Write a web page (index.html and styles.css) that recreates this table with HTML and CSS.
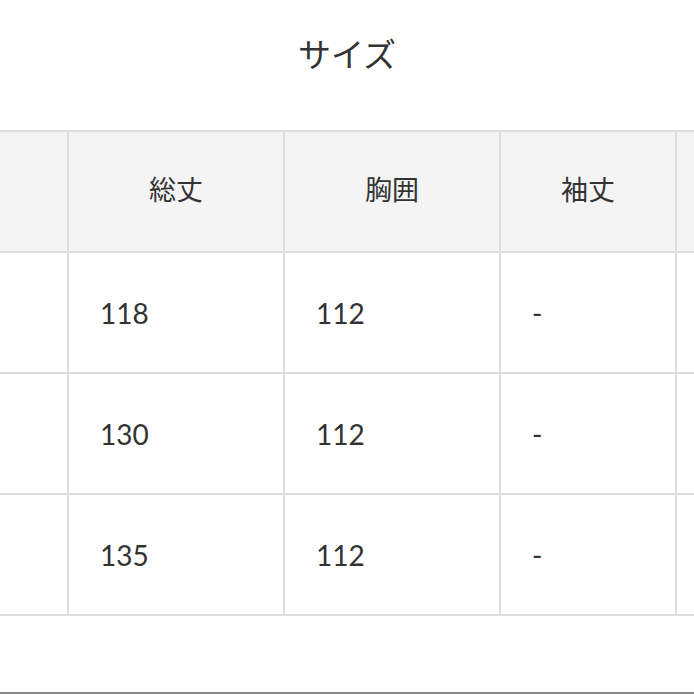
FILE: index.html
```html
<!DOCTYPE html>
<html lang="ja">
<head>
<meta charset="utf-8">
<title>サイズ</title>
<link rel="stylesheet" href="styles.css">
</head>
<body>
<div class="page">
  <h2 class="title">サイズ</h2>
  <div class="table">
    <div class="cell head"></div>
    <div class="cell head">総丈</div>
    <div class="cell head">胸囲</div>
    <div class="cell head">袖丈</div>
    <div class="cell head last"></div>

    <div class="cell"></div>
    <div class="cell num">118</div>
    <div class="cell num">112</div>
    <div class="cell num">-</div>
    <div class="cell last"></div>

    <div class="cell"></div>
    <div class="cell num">130</div>
    <div class="cell num">112</div>
    <div class="cell num">-</div>
    <div class="cell last"></div>

    <div class="cell"></div>
    <div class="cell num">135</div>
    <div class="cell num">112</div>
    <div class="cell num">-</div>
    <div class="cell last"></div>
  </div>
  <div class="edge"></div>
</div>
</body>
</html>
```

FILE: styles.css
```css
* { box-sizing: border-box; }
html, body { margin: 0; padding: 0; background: #fff; }
body { width: 694px; height: 694px; overflow: hidden; }
.page {
  font-family: Lato, "Noto Sans CJK JP", sans-serif;
  color: #333;
}
.title {
  margin: 0;
  height: 130px;
  padding-top: 33px;
  text-align: center;
  font-family: "Noto Sans CJK JP", sans-serif;
  font-weight: 400;
  font-size: 33px;
  line-height: 40px;
  color: #333;
}
.table {
  display: grid;
  grid-template-columns: 69px 216px 216px 176px 1fr;
  grid-auto-rows: 121px;
  border-top: 2px solid #dedede;
}
.cell {
  border-right: 2px solid #dedede;
  border-bottom: 2px solid #dedede;
  display: flex;
  align-items: center;
  font-size: 27px;
}
.cell.last { border-right: none; }
.head {
  background: #f4f4f4;
  justify-content: center;
  font-family: "Noto Sans CJK JP", sans-serif;
  font-size: 27px;
  padding-bottom: 6px;
}
.num {
  padding-left: 31px;
  font-family: Lato, sans-serif;
  font-size: 28px;
}
.edge {
  margin-top: 76px;
  height: 2px;
  background: #8a8a8a;
}
```
